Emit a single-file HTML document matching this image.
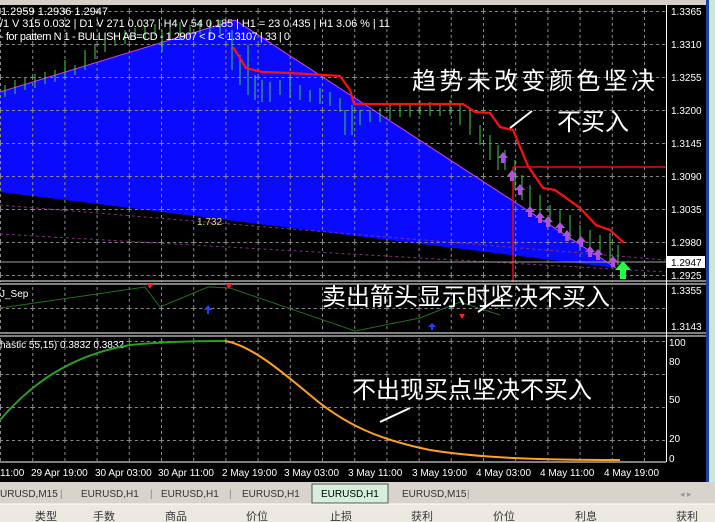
<!DOCTYPE html>
<html><head><meta charset="utf-8"><style>
body{margin:0;width:715px;height:522px;overflow:hidden;background:#d4d0c8;font-family:"Liberation Sans","Noto Sans CJK SC",sans-serif;}
svg{position:absolute;left:0;top:0}
.t{font-family:"Liberation Sans","Noto Sans CJK SC",sans-serif}
</style></head><body>
<svg width="715" height="522" viewBox="0 0 715 522">
<rect x="0" y="0" width="715" height="522" fill="#d4d0c8"/>
<rect x="0" y="5" width="706" height="477" fill="#000"/>
<rect x="706" y="0" width="3" height="482" fill="#1a3fb0"/>
<rect x="709" y="0" width="6" height="482" fill="#c8e8d8"/>
<defs>
<pattern id="g" width="32.2" height="33" patternUnits="userSpaceOnUse" x="0" y="11">
<path d="M0.5 0V33M0 0.5H32.2" stroke="#8a8a8a" stroke-width="1" stroke-dasharray="3,3" fill="none"/>
</pattern>
</defs>
<polygon points="0,92 235,20 616,268 0,192" fill="#0a0aff"/>
<rect x="0" y="5" width="666" height="277" fill="url(#g)"/>
<line x1="0" y1="92" x2="235" y2="20" stroke="#d040ff" stroke-width="1"/>
<line x1="235" y1="20" x2="616" y2="268" stroke="#d040ff" stroke-width="1"/>
<line x1="0" y1="205" x2="666" y2="260" stroke="#803080" stroke-dasharray="3,3"/>
<line x1="0" y1="234" x2="666" y2="272" stroke="#803080" stroke-dasharray="3,3"/>
<text x="197" y="225" font-size="10" fill="#e8e060" class="t">1.732</text>
<g stroke="#40d040" stroke-width="1">
<path d="M5 85v12M15 80v14M25 78v12M35 74v14M45 72v12M55 70v12M65 60v18M75 65v10M85 50v20M95 45v14M105 38v14M115 34v12M125 30v14M135 28v12M145 26v14M155 24v12M162 30v22M170 20v20M180 22v18M190 25v14M200 20v14M210 22v16M220 20v14M232 30v40M240 55v30M248 45v50M255 75v25M262 80v22M270 82v20M280 80v15M290 78v20M300 85v15M310 90v12M320 88v16M330 92v14M340 98v14M345 110v25M352 105v30M360 110v15M370 110v12M380 108v14M390 105v15M400 103v14M410 105v12M420 100v15M430 102v14M440 104v12M450 100v15M460 105v20M470 110v25M480 125v20M490 135v25M498 145v25M505 150v20M515 160v30M522 175v25M530 185v25M540 195v25M550 205v20M560 210v22M570 215v25M580 225v25M590 230v25M600 235v20M610 233v30M618 245v20"/>
</g>
<polyline points="233,47 246,68 262,72 290,73 340,76 350,90 354,104 463,104 475,112 490,113 500,127 513,130 528,166 543,188 555,190 580,208 596,225 610,230 624,243" fill="none" stroke="#ff1010" stroke-width="2.2"/>
<line x1="513" y1="167" x2="666" y2="167" stroke="#e01010" stroke-width="1.5"/>
<line x1="513" y1="167" x2="513" y2="282" stroke="#e01010" stroke-width="1.5"/>
<line x1="0" y1="262" x2="666" y2="262" stroke="#a0a0a0"/>
<g fill="#b050e0">
<path d="M498 158l5-6 5 6h-3v5h-4v-5z"/><path d="M507 176l5-6 5 6h-3v5h-4v-5z"/><path d="M515 190l5-6 5 6h-3v5h-4v-5z"/>
<path d="M525 212l5-6 5 6h-3v5h-4v-5z"/><path d="M535 218l5-6 5 6h-3v5h-4v-5z"/><path d="M543 222l5-6 5 6h-3v5h-4v-5z"/>
<path d="M555 228l5-6 5 6h-3v5h-4v-5z"/><path d="M562 236l5-6 5 6h-3v5h-4v-5z"/><path d="M576 242l5-6 5 6h-3v5h-4v-5z"/>
<path d="M585 252l5-6 5 6h-3v5h-4v-5z"/><path d="M593 255l5-6 5 6h-3v5h-4v-5z"/><path d="M608 262l5-6 5 6h-3v5h-4v-5z"/>
</g>
<path d="M615 270l8-9 8 9h-5v9h-6v-9z" fill="#20ff40"/>
<g class="t" font-size="11" fill="#fff">
<text x="1" y="15">1.2959 1.2936 1.2947</text>
<text x="0" y="27" textLength="390">/1 V 315   0.032 |  D1 V 271   0.037 |  H4 V 54   0.185 |  H1 = 23   0.435 |  H1  3.06 % | 11</text>
<text x="0" y="40" textLength="290">-  for pattern N 1 - BULLISH AB=CD - 1.2907 &lt; D &lt; 1.3107 | 33 | 0</text>
</g>
<rect x="666" y="5" width="1" height="457" fill="#fff"/>
<g class="t" font-size="10" fill="#fff">
<text x="671" y="15">1.3365</text><text x="671" y="48">1.3310</text><text x="671" y="81">1.3255</text>
<text x="671" y="114">1.3200</text><text x="671" y="147">1.3145</text><text x="671" y="180">1.3090</text>
<text x="671" y="213">1.3035</text><text x="671" y="246">1.2980</text><text x="671" y="279">1.2925</text>
</g>
<rect x="667" y="256" width="38" height="12" fill="#fff"/>
<text x="671" y="266" font-size="10" fill="#000" class="t">1.2947</text>
<path d="M0 281H706M0 284H706" stroke="#fff"/>
<path d="M0 333H706M0 336H706" stroke="#fff"/>
<rect x="0" y="285" width="666" height="48" fill="url(#g)"/>
<polyline points="0,308 145,287 160,307 208,287 230,288 355,331 420,318 460,302 500,315" fill="none" stroke="#207020"/>
<text x="0" y="297" font-size="10" fill="#fff" class="t">J_Sep</text>
<path d="M147 284h6l-3 5z M226 284h6l-3 5z" fill="#ff2020"/>
<path d="M459 314h6l-3 5z" fill="#ff2020"/>
<path d="M204 310l4-5 4 5h-3v4h-2v-4z" fill="#2040ff"/>
<path d="M428 327l4-4 4 4h-3v3h-2v-3z" fill="#2040ff"/>
<text x="671" y="294" font-size="10" fill="#fff" class="t">1.3355</text>
<text x="671" y="330" font-size="10" fill="#fff" class="t">1.3143</text>
<rect x="0" y="337" width="666" height="125" fill="url(#g)"/>
<text x="0" y="348" font-size="10" fill="#fff" class="t">hastic 55,15) 0.3832 0.3832</text>
<path d="M0 420C30 385 70 355 130 345C160 342 190 341 225 341" fill="none" stroke="#28a028" stroke-width="2"/>
<path d="M225 341C250 345 280 370 310 395C345 425 380 440 430 450C480 458 540 460 620 460" fill="none" stroke="#ffa020" stroke-width="2"/>
<g class="t" font-size="10" fill="#fff">
<text x="669" y="346">100</text><text x="669" y="365">80</text><text x="669" y="403">50</text><text x="669" y="442">20</text><text x="669" y="462">0</text>
</g>
<rect x="0" y="462" width="706" height="20" fill="#000"/>
<line x1="0" y1="462" x2="666" y2="462" stroke="#fff"/>
<g class="t" font-size="10" fill="#fff">
<text x="0" y="476">11:00</text><text x="31" y="476">29 Apr 19:00</text><text x="95" y="476">30 Apr 03:00</text>
<text x="158" y="476">30 Apr 11:00</text><text x="222" y="476">2 May 19:00</text><text x="284" y="476">3 May 03:00</text>
<text x="348" y="476">3 May 11:00</text><text x="412" y="476">3 May 19:00</text><text x="476" y="476">4 May 03:00</text>
<text x="540" y="476">4 May 11:00</text><text x="604" y="476">4 May 19:00</text>
</g>
<g class="t" font-size="24" fill="#fff">
<text x="412" y="89" textLength="243">趋势未改变颜色坚决</text>
<text x="557" y="130" textLength="72">不买入</text>
<text x="322" y="305" textLength="288">卖出箭头显示时坚决不买入</text>
<text x="352" y="398" textLength="240">不出现买点坚决不买入</text>
</g>
<g stroke="#fff" stroke-width="2">
<line x1="510" y1="128" x2="532" y2="111"/>
<line x1="478" y1="312" x2="500" y2="297"/>
<line x1="380" y1="422" x2="410" y2="408"/>
</g>
<rect x="0" y="482" width="715" height="22" fill="#d8d4cc"/>
<g class="t" font-size="10" fill="#333">
<text x="0" y="497">URUSD,M15</text><text x="60" y="497" fill="#888">|</text>
<text x="81" y="497">EURUSD,H1</text><text x="150" y="497" fill="#888">|</text>
<text x="161" y="497">EURUSD,H1</text><text x="229" y="497" fill="#888">|</text>
<text x="242" y="497">EURUSD,H1</text>
</g>
<rect x="312" y="484" width="76" height="19" fill="#d6eedc" stroke="#555"/>
<text x="321" y="497" font-size="10" fill="#000" class="t">EURUSD,H1</text>
<text x="402" y="497" font-size="10" fill="#333" class="t">EURUSD,M15</text>
<text x="467" y="497" font-size="10" fill="#888">|</text>
<text x="680" y="497" font-size="9" fill="#999">◂ ▸</text>
<rect x="0" y="504" width="715" height="18" fill="#ece9e0"/>
<line x1="0" y1="504" x2="715" y2="504" stroke="#fff"/>
<g class="t" font-size="11" fill="#333">
<text x="35" y="520">类型</text><text x="93" y="520">手数</text><text x="165" y="520">商品</text>
<text x="246" y="520">价位</text><text x="330" y="520">止损</text><text x="411" y="520">获利</text>
<text x="493" y="520">价位</text><text x="575" y="520">利息</text><text x="676" y="520">获利</text>
</g>
</svg>
</body></html>
